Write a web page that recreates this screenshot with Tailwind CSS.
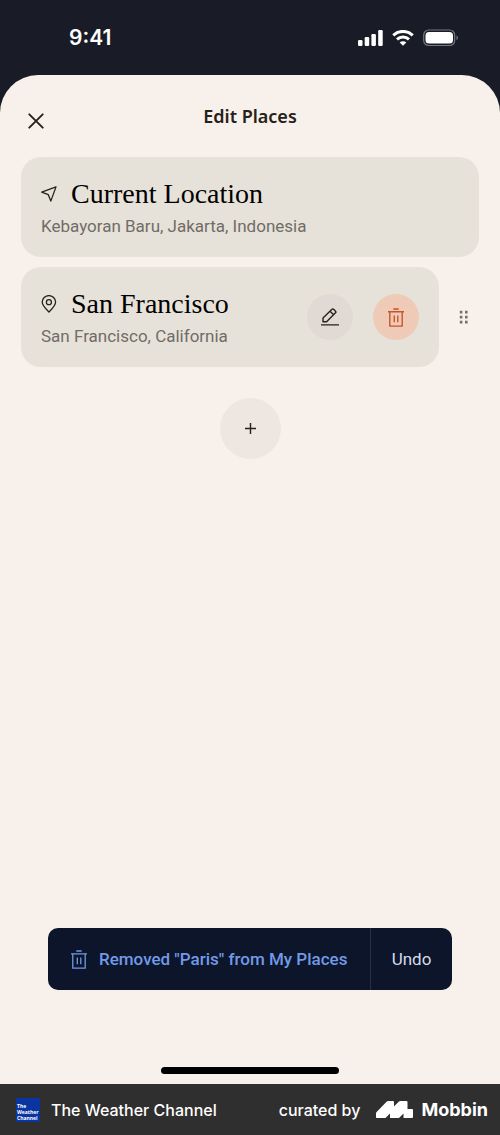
<!DOCTYPE html>
<html lang="en">
<head>
<meta charset="utf-8">
<meta name="viewport" content="width=device-width, initial-scale=1">
<title>Edit Places</title>
<script src="https://cdn.jsdelivr.net/npm/@tailwindcss/browser@4"></script>
</head>
<body class="flex min-h-screen flex-col bg-[#191c27] font-['Roboto','Noto_Sans',sans-serif]">
<header class="flex h-[75px] items-center justify-between pr-[41px] pl-[69px] text-white">
  <time class="font-['Inter',sans-serif] text-[21px] font-semibold">9:41</time>
  <div class="flex items-center gap-[9px]">
    <svg class="h-4 w-[26px]" viewBox="0 0 26 16" fill="currentColor" role="img" aria-label="Signal"><rect x="1" y="10" width="4.500" height="6" rx="1.200"/><rect x="7.700" y="7" width="4.500" height="9" rx="1.200"/><rect x="14.400" y="4" width="4.500" height="12" rx="1.200"/><rect x="21.200" y="0" width="4.500" height="16" rx="1.200"/></svg>
    <svg class="h-4 w-[22px]" viewBox="0 0 22 16" fill="none" stroke="currentColor" stroke-width="3" role="img" aria-label="Wi-Fi"><path d="M1.300 5.300a14 14 0 0 1 19.400 0"/><path d="M5 9.300a8.700 8.700 0 0 1 12 0"/><path d="M11 15.800 7.700 12.500a4.700 4.700 0 0 1 6.600 0z" fill="currentColor" stroke="none"/></svg>
    <svg class="h-[18px] w-9" viewBox="0 0 36 18" fill="none" role="img" aria-label="Battery"><rect x=".700" y="1" width="31" height="15.500" rx="5" stroke="#74767d" stroke-width="1.200"/><rect x="2.500" y="3" width="27.500" height="11.500" rx="3.500" fill="#fff"/><path d="M33.500 6.300q1.500 1 1.500 2.500t-1.500 2.500z" fill="#74767d"/></svg>
  </div>
</header>
<main class="flex flex-1 flex-col rounded-t-[38px] bg-[#f8f0ea] px-[21px] text-[#262119]">
  <div class="grid h-[82px] grid-cols-[1fr_auto_1fr]">
    <button type="button" aria-label="Close" class="mt-[30px] -ml-px size-8">
      <svg class="mx-auto size-4" viewBox="0 0 16 16" fill="none" stroke="currentColor" stroke-width="1.900" stroke-linecap="round"><path d="m1.300 1.300 13.400 13.400M14.700 1.300 1.300 14.700"/></svg>
    </button>
    <h1 class="mt-[29px] font-['Noto_Sans',sans-serif] text-[18px] leading-6 font-semibold">Edit Places</h1>
  </div>
  <ul class="flex flex-col gap-[10px]">
    <li class="flex h-[100px] flex-col justify-center rounded-[20px] bg-[#e7e2d9] px-5 pt-[2px]">
      <div class="flex h-9 items-center gap-[14px]">
        <svg class="size-4 shrink-0" viewBox="0 0 16 16" fill="none" stroke="currentColor" stroke-width="1.300" stroke-linejoin="round"><path d="M15 .9.700 6.100l6.500 2.500 2.600 6.500z"/></svg>
        <h2 class="font-['Liberation_Serif',serif] text-[28px] leading-9 text-black">Current Location</h2>
      </div>
      <p class="text-[17px] leading-7 text-[#706c67]">Kebayoran Baru, Jakarta, Indonesia</p>
    </li>
    <li class="flex items-center">
      <div class="flex h-[100px] min-w-0 flex-1 items-center rounded-[20px] bg-[#e7e2d9] px-5">
        <div class="flex-1 pt-[2px]">
          <div class="flex h-9 items-center gap-[14px]">
            <svg class="h-[18px] w-4 shrink-0" viewBox="0 0 16 18" fill="none" stroke="currentColor" stroke-width="1.300" stroke-linejoin="round"><path d="M14.600 7.100C14.600 10.700 11.500 13.600 8 17 4.500 13.600 1.200 10.700 1.200 7.100a6.700 6.500 0 0 1 13.400 0z"/><circle cx="7.900" cy="7.200" r="2.500"/></svg>
            <h2 class="font-['Liberation_Serif',serif] text-[28px] leading-9 text-black">San Francisco</h2>
          </div>
          <p class="text-[17px] leading-7 text-[#706c67]">San Francisco, California</p>
        </div>
        <div class="flex gap-5">
          <button type="button" aria-label="Rename San Francisco" class="flex size-[46px] items-center justify-center rounded-full bg-[#e0d9d4]">
            <svg class="size-[18px]" viewBox="0 0 18 18" fill="none" stroke="currentColor" stroke-width="1.400" stroke-linejoin="round"><path d="M2 13.700v-3.600L11 1.300q.8-.8 1.600 0l1.900 1.900q.8.800 0 1.600l-8.900 8.900zM9.100 3.300l3.500 3.500M0 16.900h18"/></svg>
          </button>
          <button type="button" aria-label="Delete San Francisco" class="flex size-[46px] items-center justify-center rounded-full bg-[#eecab7] text-[#c9532a]">
            <svg class="h-[19px] w-4" viewBox="0 0 16 19" fill="none" stroke="currentColor" stroke-width="1.400"><path d="M0 3.800h16M5.300 1h5.400M1.800 3.800v14.300h12.400V3.800M6.300 7.500v6.800M9.800 7.500v6.800"/></svg>
          </button>
        </div>
      </div>
      <button type="button" aria-label="Reorder San Francisco" class="flex h-8 w-10 items-center justify-end pr-[10px] text-[#75706b]">
        <svg class="h-[14px] w-[10px]" viewBox="0 0 10 14" fill="currentColor"><path d="M.8.800h2.600v2.600H.8zM6 .8h2.600v2.600H6zM.8 5.800h2.600v2.600H.8zM6 5.800h2.600v2.600H6zM.8 10.800h2.600v2.600H.8zM6 10.800h2.600v2.600H6z"/></svg>
      </button>
    </li>
  </ul>
  <button type="button" aria-label="Add place" class="mx-auto mt-[31px] flex size-[61px] items-center justify-center rounded-full bg-[#eee6e0]">
    <svg class="size-[11px]" viewBox="0 0 11 11" fill="none" stroke="currentColor" stroke-width="1.400"><path d="M5.500 0v11M0 5.500h11"/></svg>
  </button>
  <div class="mx-[27px] mt-auto flex h-[62px] rounded-[10px] bg-[#0c1529] text-[17px]">
    <p role="status" class="flex flex-1 items-center gap-3 pt-px pl-[23px] font-medium whitespace-nowrap text-[#729ae8]">
      <svg class="h-[19px] w-4 shrink-0" viewBox="0 0 16 19" fill="none" stroke="currentColor" stroke-width="1.300"><path d="M0 3.800h16M5.300 1h5.400M1.800 3.800v14.300h12.400V3.800M6.300 7.500v6.800M9.800 7.500v6.800"/></svg>
      Removed "Paris" from My Places
    </p>
    <button type="button" class="w-[82px] border-l border-[#292f41] pt-[2px] text-[#d5dcec]">Undo</button>
  </div>
  <div class="mx-auto mt-[77px] mb-[10px] h-[7px] w-[178px] rounded-full bg-black"></div>
</main>
<footer class="flex h-[51px] items-center bg-[#2f2f2f] pr-3 pl-4 font-['Inter',sans-serif] text-[16px] font-medium text-white">
  <div class="flex size-6 flex-col justify-end bg-[#0a35a0] pb-px pl-px font-['Open_Sans',sans-serif] text-[5px] leading-[6px] font-bold"><span>The</span><span>Weather</span><span>Channel</span></div>
  <span class="ml-[11px] whitespace-nowrap">The Weather Channel</span>
  <span class="ml-auto whitespace-nowrap">curated by</span>
  <svg class="ml-4 h-[17px] w-[37px] shrink-0" viewBox="0 0 37 17" fill="currentColor"><path d="M0 16.500V12.300q0-.8.600-1.400L10.800.6q.6-.6 1.400-.6H17q1 0 1 1V5.500L22.900.6q.6-.6 1.400-.6H30.500q1 0 1 1V8H36q1 0 1 1V16q0 1-1 1H27.500V12.500L23.500 16.400q-.6.600-1.400.6H14V12.500L10 16.400q-.6.600-1.400.6H.5z"/></svg>
  <span class="ml-2 text-[18px] font-bold">Mobbin</span>
</footer>
</body>
</html>
